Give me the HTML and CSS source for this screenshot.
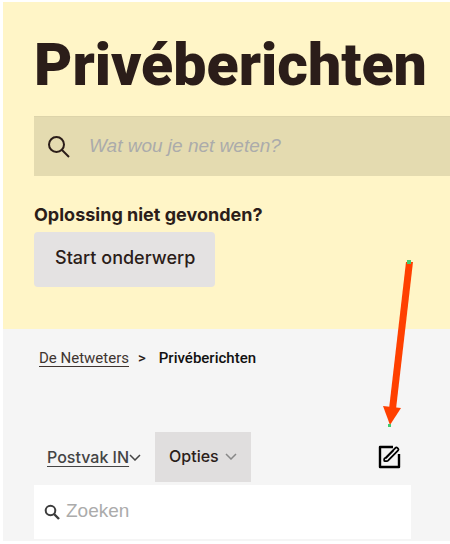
FILE: index.html
```html
<!DOCTYPE html>
<html lang="nl">
<head>
  <meta charset="UTF-8" />
  <meta name="viewport" content="width=device-width, initial-scale=1" />
  <title>Privéberichten</title>
  <link rel="stylesheet" href="styles.css">
</head>
<body>
  <div class="page">
    <header class="hero">
      <h1>Privéberichten</h1>
      <form class="hero-search">
        <svg width="24" height="24" viewBox="0 0 24 24" fill="none" stroke="#2b1d19" stroke-width="2" aria-hidden="true">
          <circle cx="9.5" cy="9.5" r="7.5" />
          <path d="M15 15l7 7" />
        </svg>
        <input type="search" placeholder="Wat wou je net weten?" aria-label="Zoeken in de community" />
      </form>
      <p class="hero-label">Oplossing niet gevonden?</p>
      <button type="button" class="start-button">Start onderwerp</button>
    </header>

    <nav class="breadcrumb" aria-label="Kruimelpad">
      <a href="#">De Netweters</a>
      <span class="separator">&gt;</span>
      <span class="current">Privéberichten</span>
    </nav>

    <main class="messages">
      <div class="toolbar">
        <a href="#" class="inbox-link"><span class="inbox-text">Postvak IN</span><svg width="12" height="8" viewBox="0 0 12 8" fill="none" stroke="#444" stroke-width="1.5" aria-hidden="true"><path d="M1 2l5 5 5-5" /></svg></a>
        <button type="button" class="options-button">Opties
          <svg width="12" height="8" viewBox="0 0 12 8" fill="none" stroke="#888" stroke-width="1.5" aria-hidden="true"><path d="M1 2l5 5 5-5" /></svg>
        </button>
        <button type="button" class="compose-button" aria-label="Nieuw bericht">
          <svg width="24" height="24" viewBox="0 0 24 24" fill="none" stroke="#000" stroke-linejoin="round" aria-hidden="true">
            <path d="M15 2H2v20h19V9" stroke-width="2.4" />
            <path d="M8 12.500L17.500 2.800q1-.8 1.800 0l.8.8q.8.9 0 1.800L10.500 15.200q-.8 1-2 1H7q-.8 0-.8-.8v-1.300q0-.9 1.800-1.600z" stroke-width="1.800" />
            <path d="M7.500 14l8-8" stroke-width="1" />
          </svg>
        </button>
      </div>
      <form class="message-search">
        <svg width="16" height="16" viewBox="0 0 16 16" fill="none" stroke="#3c3c3c" aria-hidden="true">
          <circle cx="6.5" cy="6.5" r="4.8" stroke-width="2" />
          <path d="M10 10l5 5" stroke-width="2.4" />
        </svg>
        <input type="search" placeholder="Zoeken" aria-label="Zoeken in berichten" />
      </form>
    </main>

    <svg class="arrow" width="32" height="170" viewBox="0 0 32 170" aria-hidden="true">
      <path d="M23 3h7L13 150H6z" fill="#ff4000" />
      <path d="M0 147l18 2-11 17z" fill="#ff4000" />
      <path d="M24 1h4v4h-4zM5 165h3v3H5z" fill="#42ca70" />
    </svg>
  </div>
</body>
</html>
```

FILE: styles.css
```css
* {
  box-sizing: border-box;
}

body {
  margin: 0;
  background: #fff;
  color: #2b1d19;
  font-family: Inter, "Liberation Sans", sans-serif;
  font-size: 18px;
}

.page {
  position: relative;
  margin: 2px 0 3px 3px;
  background: #f5f5f5;
}

.hero {
  padding: 28px 0 42px 31px;
  background: #fff5c7;
}

h1 {
  margin: 0 0 16px;
  font-family: Roboto, sans-serif;
  font-size: 59px;
  line-height: 70px;
  font-weight: 900;
}

.hero-search {
  display: flex;
  align-items: center;
  gap: 18px;
  height: 60px;
  padding-left: 13px;
  background: #e4dbb0;
  border-top: 1px solid #ddd4aa;
}

svg {
  display: block;
  flex: none;
}

input {
  flex: 1;
  min-width: 0;
  padding: 0 0 2px;
  border: none;
  outline: none;
  background: transparent;
  color: inherit;
  font: 19px "Liberation Sans", sans-serif;
}

input::placeholder {
  color: #ababab;
}

.hero-search input {
  font-style: italic;
}

.hero-label {
  margin: 27px 0 5px;
  font-size: 18px;
  line-height: 24px;
  font-weight: 700;
}

button {
  border: none;
  color: inherit;
  font-family: inherit;
  cursor: pointer;
}

.start-button {
  padding: 14px 20px 17px 21px;
  border-radius: 4px;
  background: #e4e2e2;
  font-size: 18px;
  line-height: 24px;
  font-weight: 500;
}

.breadcrumb {
  display: flex;
  gap: 9px;
  padding: 19px 36px 17px;
  font-family: Roboto, sans-serif;
  font-size: 15px;
  line-height: 20px;
  font-weight: 500;
}

.breadcrumb a {
  color: #3e3430;
  font-weight: 400;
  text-underline-offset: 3px;
}

.current {
  margin-left: 4px;
  color: #111;
}

.messages {
  padding: 47px 39px 2px 31px;
}

.toolbar {
  display: flex;
  align-items: center;
  margin-bottom: 3px;
  padding: 0 9px 0 13px;
}

.inbox-link {
  display: flex;
  align-items: center;
  color: #444;
  font-size: 16px;
  line-height: 24px;
  font-weight: 500;
  text-decoration: none;
}

.inbox-text {
  text-decoration: underline;
  text-underline-offset: 3px;
}

.options-button {
  display: flex;
  align-items: center;
  gap: 6px;
  margin-left: 14px;
  padding: 12px 14px 14px;
  background: #e0dede;
  font-size: 16px;
  line-height: 24px;
  font-weight: 500;
}

.compose-button {
  margin-left: auto;
  padding: 0;
  background: none;
}

.message-search {
  display: flex;
  align-items: center;
  gap: 6px;
  height: 54px;
  padding-left: 10px;
  background: #fff;
}

/* lies over the page, pointing at the compose button */
.arrow {
  position: absolute;
  top: 257px;
  right: 35px;
  pointer-events: none;
}
```
